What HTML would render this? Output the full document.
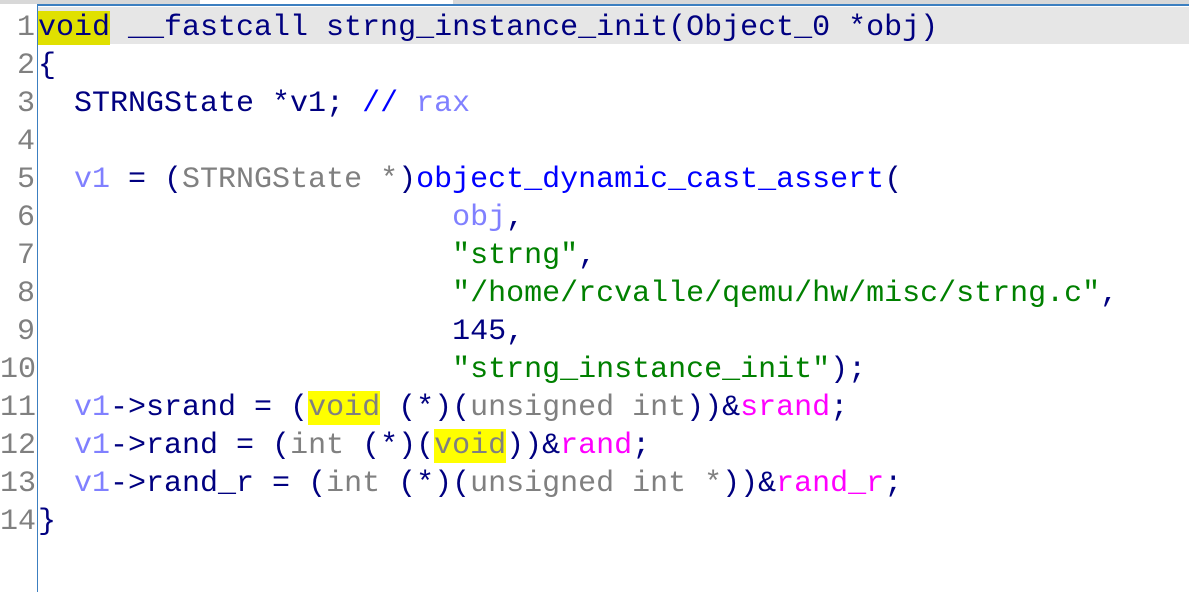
<!DOCTYPE html>
<html><head><meta charset="utf-8"><style>
html,body{margin:0;padding:0;background:#fff;width:1189px;height:592px;overflow:hidden;position:relative}
.top1{position:absolute;left:0;top:0;width:200px;height:4px;background:#d8d8d8}
.top2{position:absolute;left:453px;top:0;width:736px;height:4px;background:#d8d8d8}
.topb{position:absolute;left:38px;top:4px;width:1151px;height:2px;background:#3c7fc0}
.vl{position:absolute;left:37px;top:4px;width:1px;height:588px;background:#3c7fc0}
.hl{position:absolute;left:38px;top:7px;width:1151px;height:37px;background:#e6e6e6}
.wrap{position:absolute;left:0;top:3px;width:1189px;height:589px}
.ln{position:absolute;left:0;width:35px;text-align:right;color:#808080}
.cd{position:absolute;left:38px;color:#000080;white-space:pre}
.ln,.cd{font-family:"Liberation Mono",monospace;font-size:30px;line-height:38px;height:38px}
.v{color:#8080ff}.t{color:#808080}.s{color:#008000}.f{color:#0000ff}.p{color:#ff00ff}.c{color:#0000ff}
.y{background:#ffff00}.y1{background:#e0e000}
</style></head><body>
<div class="top1"></div><div class="top2"></div><div class="topb"></div>
<div class="hl"></div>
<div class="vl"></div>
<div class="wrap">
<div class="ln" style="top:6px">1</div><div class="cd" style="top:6px"><span class="y1">void</span> __fastcall strng_instance_init(Object_0 *obj)</div>
<div class="ln" style="top:44px">2</div><div class="cd" style="top:44px">{</div>
<div class="ln" style="top:82px">3</div><div class="cd" style="top:82px">  STRNGState *v1; <span class="c">// </span><span class="v">rax</span></div>
<div class="ln" style="top:120px">4</div><div class="cd" style="top:120px"></div>
<div class="ln" style="top:158px">5</div><div class="cd" style="top:158px">  <span class="v">v1</span> = (<span class="t">STRNGState *</span>)<span class="f">object_dynamic_cast_assert</span>(</div>
<div class="ln" style="top:196px">6</div><div class="cd" style="top:196px">                       <span class="v">obj</span>,</div>
<div class="ln" style="top:234px">7</div><div class="cd" style="top:234px">                       <span class="s">"strng"</span>,</div>
<div class="ln" style="top:272px">8</div><div class="cd" style="top:272px">                       <span class="s">"/home/rcvalle/qemu/hw/misc/strng.c"</span>,</div>
<div class="ln" style="top:310px">9</div><div class="cd" style="top:310px">                       145,</div>
<div class="ln" style="top:348px">10</div><div class="cd" style="top:348px">                       <span class="s">"strng_instance_init"</span>);</div>
<div class="ln" style="top:386px">11</div><div class="cd" style="top:386px">  <span class="v">v1</span>-&gt;srand = (<span class="t y">void</span> (*)(<span class="t">unsigned int</span>))&amp;<span class="p">srand</span>;</div>
<div class="ln" style="top:424px">12</div><div class="cd" style="top:424px">  <span class="v">v1</span>-&gt;rand = (<span class="t">int</span> (*)(<span class="t y">void</span>))&amp;<span class="p">rand</span>;</div>
<div class="ln" style="top:462px">13</div><div class="cd" style="top:462px">  <span class="v">v1</span>-&gt;rand_r = (<span class="t">int</span> (*)(<span class="t">unsigned int *</span>))&amp;<span class="p">rand_r</span>;</div>
<div class="ln" style="top:500px">14</div><div class="cd" style="top:500px">}</div>
</div>
</body></html>
